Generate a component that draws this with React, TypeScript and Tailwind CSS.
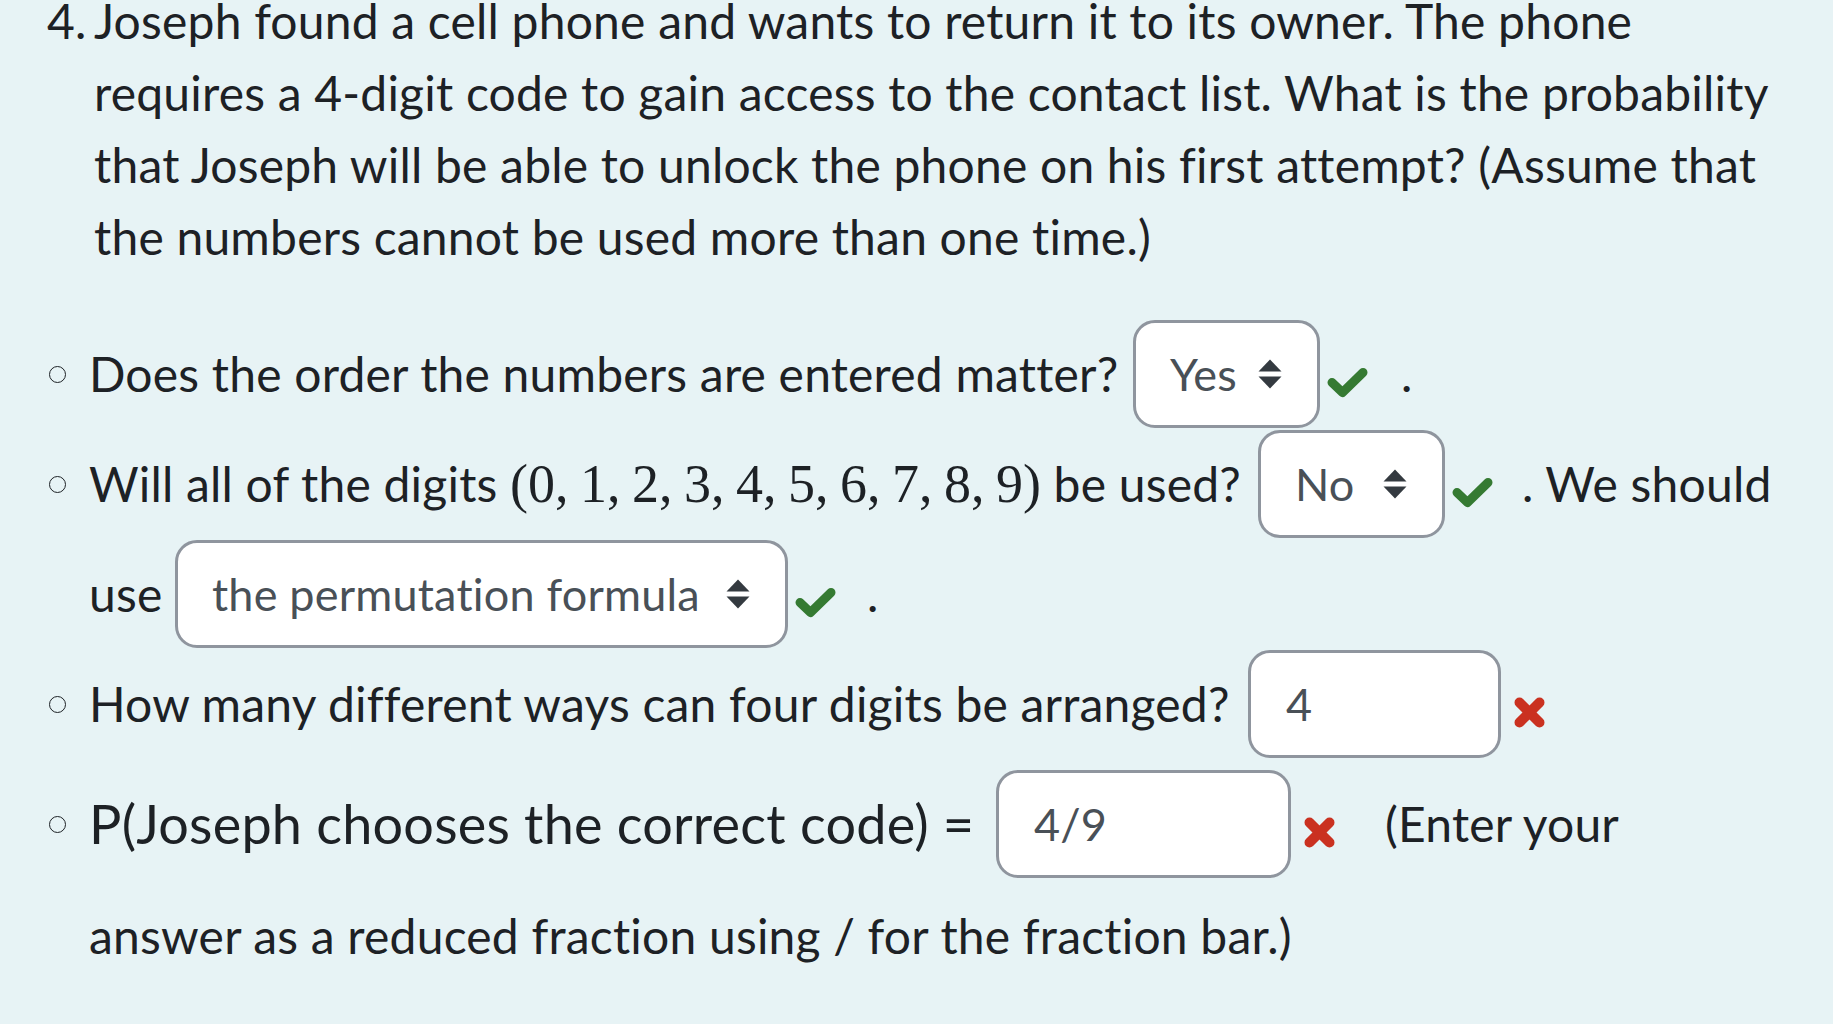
import React from "react";

function Check() {
  return (
    <svg viewBox="0 0 41 31" className="ml-[7px] mt-[16px] h-[31px] w-[41px] shrink-0">
      <polyline
        points="5,15.5 15.5,25.5 36,5.5"
        fill="none"
        stroke="#357a32"
        strokeWidth="9"
        strokeLinecap="round"
        strokeLinejoin="round"
      />
    </svg>
  );
}

function Cross() {
  return (
    <svg viewBox="0 0 31 31" className="ml-[13px] mt-[16px] h-[31px] w-[31px] shrink-0">
      <g stroke="#ca3120" strokeWidth="10" strokeLinecap="round">
        <line x1="5.5" y1="5.5" x2="25.5" y2="25.5" />
        <line x1="25.5" y1="5.5" x2="5.5" y2="25.5" />
      </g>
    </svg>
  );
}

function Arrows() {
  return (
    <svg viewBox="0 0 24 30" className="h-[30px] w-[24px] shrink-0" fill="#343a40">
      <path d="M12 0.5 L23.5 12.5 L0.5 12.5 Z" />
      <path d="M0.5 17.5 L23.5 17.5 L12 29.5 Z" />
    </svg>
  );
}

function Select({ label, w }: { label: string; w: string }) {
  return (
    <div
      className={`flex h-[108px] shrink-0 items-center justify-between rounded-[22px] border-[3px] border-[#8f959e] bg-white pl-[34px] pr-[35px] text-[45px] text-[#495057] ${w}`}
    >
      <span>{label}</span>
      <Arrows />
    </div>
  );
}

function Input({ value, w }: { value: string; w: string }) {
  return (
    <div
      className={`flex h-[108px] shrink-0 items-center rounded-[22px] border-[3px] border-[#8f959e] bg-white pl-[35px] text-[45px] text-[#495057] ${w}`}
    >
      {value}
    </div>
  );
}

function Bullet() {
  return (
    <div className="flex w-[89px] shrink-0 justify-start pl-[49px]">
      <div className="h-[17px] w-[17px] rounded-full border-[1.5px] border-[#1d2125]" />
    </div>
  );
}

export default function App() {
  return (
    <div className="min-h-screen w-full overflow-hidden bg-[#e7f3f5] font-['Lato',sans-serif] text-[48px] tracking-[0.2px] text-[#1d2125] [font-variant-ligatures:none]">
      <div className="-mt-[15px] flex leading-[72px]">
        <div className="w-[94px] shrink-0 pl-[47px]">4.</div>
        <div className="whitespace-nowrap">
          <div>Joseph found a cell phone and wants to return it to its owner. The phone</div>
          <div>requires a 4-digit code to gain access to the contact list. What is the probability</div>
          <div>that Joseph will be able to unlock the phone on his first attempt? (Assume that</div>
          <div>the numbers cannot be used more than one time.)</div>
        </div>
      </div>

      <div className="mt-[46px] flex flex-col whitespace-nowrap leading-[72px]">
        <div className="flex h-[110px] items-center">
          <Bullet />
          <span className="w-[1044px] shrink-0">Does the order the numbers are entered matter?</span>
          <Select label="Yes" w="w-[187px]" />
          <Check />
          <span className="ml-[33px]">.</span>
        </div>

        <div className="flex h-[110px] items-center">
          <Bullet />
          <span className="w-[1169px] shrink-0">
            Will all of the digits{" "}
            <span className="font-['Liberation_Serif',serif] text-[54px] tracking-normal [word-spacing:-2px]">
              (0, 1, 2, 3, 4, 5, 6, 7, 8, 9)
            </span>{" "}
            be used?
          </span>
          <Select label="No" w="w-[187px]" />
          <Check />
          <span className="ml-[29px]">. We should</span>
        </div>

        <div className="flex h-[110px] items-center pl-[89px]">
          <span className="w-[86px] shrink-0">use</span>
          <Select label="the permutation formula" w="w-[613px]" />
          <Check />
          <span className="ml-[31px]">.</span>
        </div>

        <div className="flex h-[110px] items-center">
          <Bullet />
          <span className="w-[1159px] shrink-0">How many different ways can four digits be arranged?</span>
          <Input value="4" w="w-[253px]" />
          <Cross />
        </div>

        <div className="mt-[10px] flex h-[110px] items-center">
          <Bullet />
          <span className="w-[907px] shrink-0 text-[54px]">P(Joseph chooses the correct code) =</span>
          <Input value="4/9" w="w-[295px]" />
          <Cross />
          <span className="ml-[50px]">(Enter your</span>
        </div>

        <div className="mt-[2px] flex h-[110px] items-center pl-[89px]">
          <span>answer as a reduced fraction using / for the fraction bar.)</span>
        </div>
      </div>
    </div>
  );
}
